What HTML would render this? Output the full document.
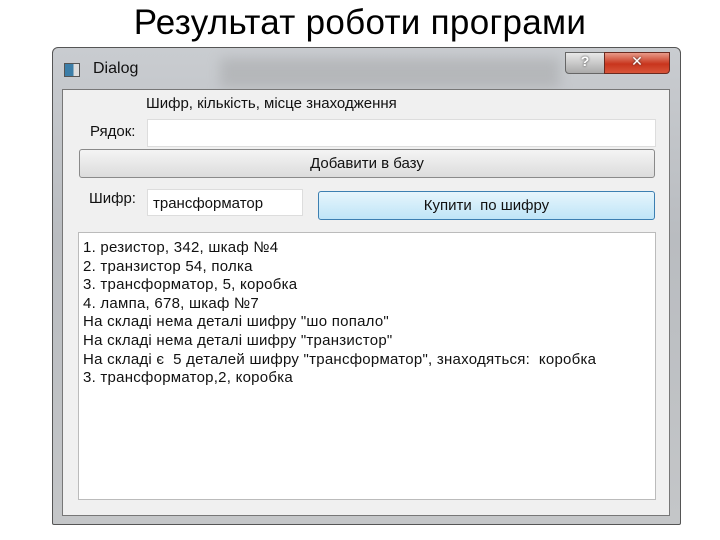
<!DOCTYPE html>
<html><head><meta charset="utf-8"><style>
body{margin:0;width:720px;height:540px;background:#fff;position:relative;overflow:hidden;font-family:"Liberation Sans","DejaVu Sans",sans-serif;}
.a{position:absolute;}
.t{font-size:15px;color:#111;white-space:nowrap;}
</style></head><body>
<div class="a" style="left:0;top:3px;width:720px;text-align:center;font-size:35px;letter-spacing:0.3px;color:#000;">Результат роботи програми</div>
<div class="a" style="left:52px;top:47px;width:627px;height:476px;background:linear-gradient(#c9ccd0,#b9bcc0 40%,#c4c6c8);border:1px solid #555;border-radius:6px 6px 2px 2px;"></div>
<div class="a" style="left:220px;top:58px;width:340px;height:30px;background:#a9abad;filter:blur(6px);opacity:.6"></div>
<div class="a" style="left:64px;top:63px;width:14px;height:12px;background:linear-gradient(90deg,#3c7ea8 60%,#ddd 60%);border:1px solid #555"></div>
<div class="a t" style="left:93px;top:60px;font-size:16px;">Dialog</div>
<div class="a" style="left:565px;top:52px;width:38px;height:20px;background:linear-gradient(#e8e8e8,#aaa);border:1px solid #666;border-radius:0 0 0 4px;text-align:center;font-size:14px;font-weight:bold;color:#fff;text-shadow:0 0 2px #333;">?</div>
<div class="a" style="left:604px;top:52px;width:64px;height:20px;background:linear-gradient(#e89a88,#c8351d 55%,#d8553a);border:1px solid #6a2a20;border-radius:0 0 4px 0;text-align:center;font-size:14px;font-weight:bold;color:#fff;text-shadow:0 0 2px #333;">✕</div>
<div class="a" style="left:62px;top:89px;width:606px;height:425px;background:#f0f0f0;border:1px solid #777;"></div>
<div class="a t" style="left:146px;top:95px;">Шифр, кількість, місце знаходження</div>
<div class="a t" style="left:90px;top:123px;">Рядок:</div>
<div class="a" style="left:147px;top:119px;width:507px;height:26px;background:#fff;border:1px solid #ddd;"></div>
<div class="a t" style="left:79px;top:149px;width:574px;height:27px;line-height:27px;text-align:center;background:linear-gradient(#f4f4f4,#dcdcdc);border:1px solid #8a8a8a;border-radius:3px;">Добавити в базу</div>
<div class="a t" style="left:89px;top:190px;">Шифр:</div>
<div class="a t" style="left:147px;top:189px;width:156px;height:27px;line-height:27px;padding-left:5px;box-sizing:border-box;background:#fff;border:1px solid #ddd;">трансформатор</div>
<div class="a t" style="left:318px;top:191px;width:335px;height:27px;line-height:27px;text-align:center;background:linear-gradient(#e6f5fc,#bfe5f7);border:1px solid #3c7fb1;border-radius:3px;">Купити&nbsp; по шифру</div>
<div class="a" style="left:78px;top:232px;width:576px;height:266px;background:#fff;border:1px solid #bbb;"></div>
<div class="a t" style="left:83px;top:239px;line-height:18.6px;font-size:15px;letter-spacing:0.25px;">1. резистор, 342, шкаф №4<br>2. транзистор 54, полка<br>3. трансформатор, 5, коробка<br>4. лампа, 678, шкаф №7<br>На складі нема деталі шифру "шо попало"<br>На складі нема деталі шифру "транзистор"<br>На складі є&nbsp; 5 деталей шифру "трансформатор", знаходяться:&nbsp; коробка<br>3. трансформатор,2, коробка</div>
</body></html>
